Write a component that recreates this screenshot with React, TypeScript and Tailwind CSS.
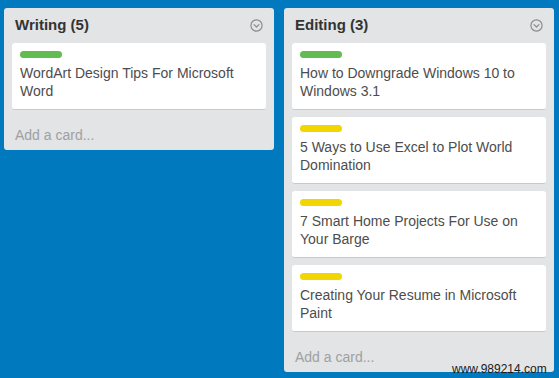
import React from 'react';

type Card = { label: 'green' | 'yellow'; title: string };

const lists: { title: string; count: number; cards: Card[] }[] = [
  {
    title: 'Writing',
    count: 5,
    cards: [{ label: 'green', title: 'WordArt Design Tips For Microsoft Word' }],
  },
  {
    title: 'Editing',
    count: 3,
    cards: [
      { label: 'green', title: 'How to Downgrade Windows 10 to Windows 3.1' },
      { label: 'yellow', title: '5 Ways to Use Excel to Plot World Domination' },
      { label: 'yellow', title: '7 Smart Home Projects For Use on Your Barge' },
      { label: 'yellow', title: 'Creating Your Resume in Microsoft Paint' },
    ],
  },
];

function MenuIcon() {
  return (
    <svg width="13" height="13" viewBox="0 0 13 13" fill="none" stroke="#8c8c8c" strokeWidth="1.2">
      <circle cx="6.5" cy="6.5" r="5.6" />
      <path d="M4 5.6 L6.5 8 L9 5.6" strokeLinecap="round" strokeLinejoin="round" />
    </svg>
  );
}

function CardItem({ card }: { card: Card }) {
  return (
    <div className="h-[67px] bg-white rounded-[3px] border-b border-[#c8c9cb] pl-2 pr-2 pt-2">
      <div
        className={`h-[7px] w-[42px] rounded-full ${
          card.label === 'green' ? 'bg-[#61bd4f]' : 'bg-[#f2d600]'
        }`}
      />
      <p className="mt-[6px] text-[14px] leading-[18px] text-[#4d4d4d]">{card.title}</p>
    </div>
  );
}

export default function App() {
  return (
    <div
      className="relative h-[378px] w-[559px] bg-[#0079bf] overflow-hidden"
      style={{ fontFamily: '"Liberation Sans", Arial, sans-serif' }}
    >
      <div className="flex items-start gap-[10px] pl-[4px] pt-[8px]">
        {lists.map((list) => (
          <div key={list.title} className="w-[270px] bg-[#e2e4e6] rounded-[3px] px-2">
            <div className="h-[35px] flex items-center justify-between pl-[3px] pr-[3px]">
              <span className="text-[15px] font-bold text-[#333]">
                {list.title} ({list.count})
              </span>
              <MenuIcon />
            </div>
            <div className="flex flex-col gap-[7px]">
              {list.cards.map((c) => (
                <CardItem key={c.title} card={c} />
              ))}
            </div>
            <div className="pt-4 pb-[6px] pl-[3px] text-[14px] leading-[18px] text-[#a0a0a0]">
              Add a card...
            </div>
          </div>
        ))}
      </div>
      <span className="absolute left-[452px] top-[362px] text-[12px] leading-[14px] text-[#1a1a1a]">
        www.989214.com
      </span>
    </div>
  );
}
